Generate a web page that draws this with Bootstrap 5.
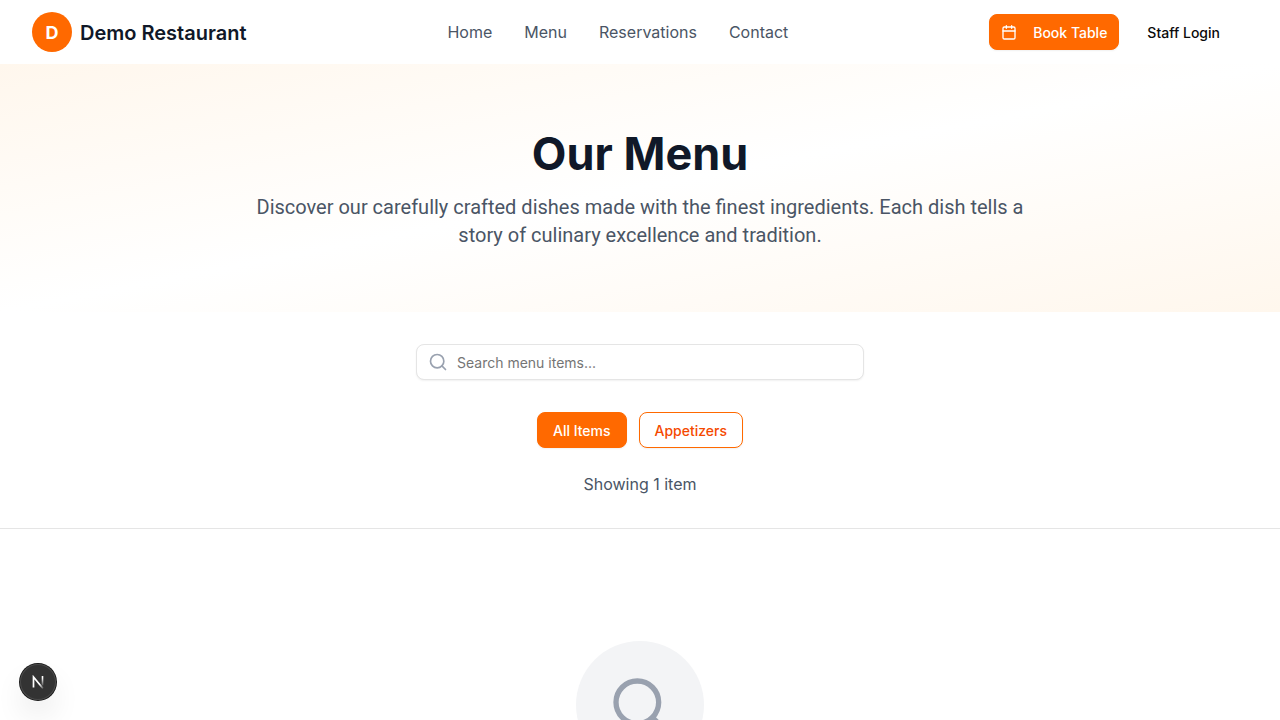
<!DOCTYPE html>
<html lang="en">
<head>
<meta charset="utf-8">
<meta name="viewport" content="width=device-width, initial-scale=1">
<title>Our Menu - Demo Restaurant</title>
<link href="https://cdn.jsdelivr.net/npm/bootstrap@5.3.0/dist/css/bootstrap.min.css" rel="stylesheet">
<style>
  :root { --brand: #ff6900; --brand-dark: #f54900; --ink: #101828; --slate: #4a5565; --mist: #99a1af; }
  body { font-family: Inter, "Liberation Sans", sans-serif; color: var(--ink); background: #fff; }
  .site-header { min-height: 64px; }
  .brand-dot { width: 40px; height: 40px; background: var(--brand); font-size: 18px; }
  .brand-name { font-size: 20px; line-height: 28px; color: var(--ink); padding-top: 2px; font-weight: 600; }
  .site-nav a { color: var(--slate); line-height: 24px; }
  .btn-site { --bs-btn-font-size: 14px; --bs-btn-line-height: 20px; --bs-btn-font-weight: 500;
    --bs-btn-border-radius: 8px; padding: 8px 15px 6px; }
  .btn-brand { --bs-btn-color: #fff; --bs-btn-bg: var(--brand); --bs-btn-border-color: var(--brand);
    --bs-btn-hover-color: #fff; --bs-btn-hover-bg: var(--brand-dark); --bs-btn-hover-border-color: var(--brand-dark); }
  .btn-brand-line { --bs-btn-color: var(--brand-dark); --bs-btn-bg: #fff; --bs-btn-border-color: var(--brand);
    --bs-btn-hover-color: var(--brand-dark); --bs-btn-hover-bg: #fff7ed; --bs-btn-hover-border-color: var(--brand); }
  .btn-plain { --bs-btn-color: #0a0a0a; --bs-btn-hover-color: #0a0a0a; --bs-btn-hover-bg: #f5f5f5; }
  .btn-compact { padding-left: 11px; padding-right: 11px; }
  .lift { box-shadow: 0 1px 2px rgba(0,0,0,.06); }
  .hero { padding: 66px 16px 62px; background: linear-gradient(to bottom right, #fff7ed, #fff, #fff7ed); }
  .hero h1 { font-size: 45px; line-height: 48px; margin-bottom: 15px; }
  .hero p { max-width: 768px; font-size: 20px; line-height: 28px; color: var(--slate); font-family: Roboto, Inter, sans-serif; margin-bottom: 1px; }
  .filters { padding: 32px 16px; border-color: #e5e5e5 !important; }
  .search-box { max-width: 448px; }
  .search-box input { height: 36px; padding: 4px 12px 4px 40px; font-size: 14px; border: 1px solid #e5e5e5; border-radius: 8px; }
  .search-box input::placeholder { color: #757575; }
  .search-box svg { left: 12px; color: var(--mist); }
  .count { color: var(--slate); line-height: 24px; }
  .results { padding: 112px 16px; }
  .empty-dot { width: 128px; height: 128px; background: #f3f4f6; color: var(--mist); }
  .dev-badge { left: 20px; bottom: 20px; width: 36px; height: 36px; background: #333;
    box-shadow: 0 0 0 1px #171717, inset 0 0 0 1px #4a4a4a, 0 16px 32px -8px rgba(0,0,0,.24); }
</style>
</head>
<body>
<header class="site-header d-flex align-items-center justify-content-between px-4 mx-2">
  <a href="#" class="d-flex align-items-center gap-2 text-decoration-none">
    <span class="brand-dot rounded-circle d-flex align-items-center justify-content-center text-white fw-bold">D</span>
    <span class="brand-name">Demo Restaurant</span>
  </a>
  <nav class="site-nav d-none d-md-flex" aria-label="Main">
    <a class="text-decoration-none me-2 pe-4" href="#">Home</a>
    <a class="text-decoration-none me-2 pe-4" href="#">Menu</a>
    <a class="text-decoration-none me-2 pe-4" href="#">Reservations</a>
    <a class="text-decoration-none" href="#">Contact</a>
  </nav>
  <div class="d-flex align-items-center gap-3 pe-3">
    <button type="button" class="btn btn-site btn-brand btn-compact lift d-flex align-items-center gap-3">
      <svg width="16" height="16" viewBox="0 0 24 24" fill="none" stroke="currentColor" stroke-width="2" stroke-linecap="round" stroke-linejoin="round" aria-hidden="true"><path d="M8 1v4M16 1v4"/><rect width="18" height="18" x="3" y="3" rx="2"/><path d="M3 9h18"/></svg>
      Book Table
    </button>
    <button type="button" class="btn btn-site btn-plain btn-compact">Staff Login</button>
  </div>
</header>
<main>
  <section class="hero text-center">
    <h1 class="fw-bold">Our Menu</h1>
    <p class="mx-auto">Discover our carefully crafted dishes made with the finest ingredients. Each dish tells a story of culinary excellence and tradition.</p>
  </section>
  <section class="filters border-bottom d-flex flex-column align-items-center">
    <div class="search-box position-relative w-100 d-flex align-items-center">
      <svg class="position-absolute" width="20" height="20" viewBox="0 0 24 24" fill="none" stroke="currentColor" stroke-width="2" stroke-linecap="round" stroke-linejoin="round" aria-hidden="true"><circle cx="11" cy="11" r="8"/><path d="m21 21-4.3-4.3"/></svg>
      <input type="text" class="form-control lift" placeholder="Search menu items..." aria-label="Search menu items">
    </div>
    <div class="category-row d-flex flex-wrap justify-content-center mt-4 pt-2">
      <button type="button" class="btn btn-site btn-brand lift me-2">All Items</button>
      <button type="button" class="btn btn-site btn-brand-line lift ms-1">Appetizers</button>
    </div>
    <p class="count mt-4 mb-0">Showing 1 item</p>
  </section>
  <section class="results d-flex justify-content-center">
    <div class="empty-dot rounded-circle d-flex align-items-center justify-content-center">
      <svg width="64" height="64" viewBox="0 0 24 24" fill="none" stroke="currentColor" stroke-width="2" stroke-linecap="round" stroke-linejoin="round" aria-hidden="true"><circle cx="11" cy="11" r="8"/><path d="m21 21-4.3-4.3"/></svg>
    </div>
  </section>
</main>
<button type="button" class="dev-badge position-fixed border-0 rounded-circle p-0 d-flex align-items-center justify-content-center" aria-label="Open developer tools">
  <svg width="14" height="14" viewBox="0 0 14 14" fill="none" aria-hidden="true">
    <defs>
      <linearGradient id="fadeStem" x1="0" y1="3" x2="0" y2="12" gradientUnits="userSpaceOnUse"><stop stop-color="#fff"/><stop offset="1" stop-color="#fff" stop-opacity="0"/></linearGradient>
      <linearGradient id="fadeDiag" x1="9" y1="9" x2="13" y2="14" gradientUnits="userSpaceOnUse"><stop stop-color="#fff"/><stop offset="1" stop-color="#fff" stop-opacity="0"/></linearGradient>
    </defs>
    <path d="M2.500 12.500V2L12 13.500" stroke="url(#fadeDiag)" stroke-width="1.700"/>
    <path d="M11.500 1v9.500" stroke="url(#fadeStem)" stroke-width="1.600"/>
  </svg>
</button>
<script src="https://cdn.jsdelivr.net/npm/bootstrap@5.3.0/dist/js/bootstrap.bundle.min.js"></script>
</body>
</html>
